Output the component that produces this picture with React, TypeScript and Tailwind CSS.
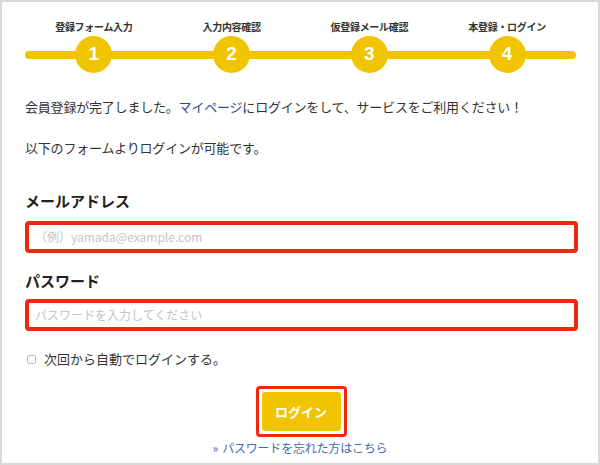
const steps = ["登録フォーム入力", "入力内容確認", "仮登録メール確認", "本登録・ログイン"];

const font = { fontFamily: '"Noto Sans CJK JP", "Liberation Sans", sans-serif' };

export default function App() {
  return (
    <div
      className="w-[600px] h-[465px] overflow-hidden border-2 border-[#d9d9d9] bg-white px-[23px] text-[#333]"
      style={font}
    >
      {/* Stepper */}
      <div className="relative mt-[20px] w-[551px]">
        <div className="absolute left-0 right-0 top-[29px] h-[8px] rounded-full bg-[#f1c400]" />
        <div className="relative grid grid-cols-4">
          {steps.map((label, i) => (
            <div key={label} className="flex flex-col items-center">
              <div className="text-[10px] font-bold leading-[10px] text-[#333] tracking-[-0.3px]">{label}</div>
              <div className="mt-[4px] flex h-[37px] w-[37px] items-center justify-center rounded-full bg-[#f1c400] font-['Liberation_Sans',sans-serif] text-[19px] font-bold text-white">
                {i + 1}
              </div>
            </div>
          ))}
        </div>
      </div>

      <p className="mt-[24px] text-[13px] leading-[20px] tracking-[-0.2px]">
        会員登録が完了しました。<span className="text-[#2b4a9a]">マイページ</span>にログインをして、サービスをご利用ください！
      </p>
      <p className="mt-[21px] text-[13px] leading-[20px] tracking-[-0.2px]">以下のフォームよりログインが可能です。</p>

      <h2 className="mt-[33px] text-[15px] font-bold leading-[20px] text-[#222]">メールアドレス</h2>
      <div className="mt-[10px] flex h-[32px] w-[553px] items-center rounded-[4px] border-[4px] border-[#ee2a0c] px-[6px] text-[12px] text-[#c4c4c4]">
        （例）yamada@example.com
      </div>

      <h2 className="mt-[18px] text-[15px] font-bold leading-[20px] text-[#222]">パスワード</h2>
      <div className="mt-[8px] flex h-[32px] w-[553px] items-center rounded-[4px] border-[4px] border-[#ee2a0c] px-[6px] text-[12px] text-[#c4c4c4]">
        パスワードを入力してください
      </div>

      <label className="mt-[18px] flex items-center gap-[8px] text-[13px] leading-[20px]">
        <span className="ml-[2px] h-[9px] w-[9px] rounded-[2px] border border-[#bbb]" />
        次回から自動でログインする。
      </label>

      <div className="mt-[17px] flex justify-center">
        <div className="ml-[2px] rounded-[4px] border-[3px] border-[#ee2a0c] p-[3px]">
          <button className="flex h-[39px] w-[79px] items-center justify-center rounded-[3px] bg-[#f1c400] text-[13px] font-bold text-white">
            ログイン
          </button>
        </div>
      </div>

      <div className="mt-[3px] text-center text-[12px] leading-[16px] tracking-[-0.2px] text-[#3d6db3]">
        <span className="mr-[4px]">»</span>パスワードを忘れた方はこちら
      </div>
    </div>
  );
}
